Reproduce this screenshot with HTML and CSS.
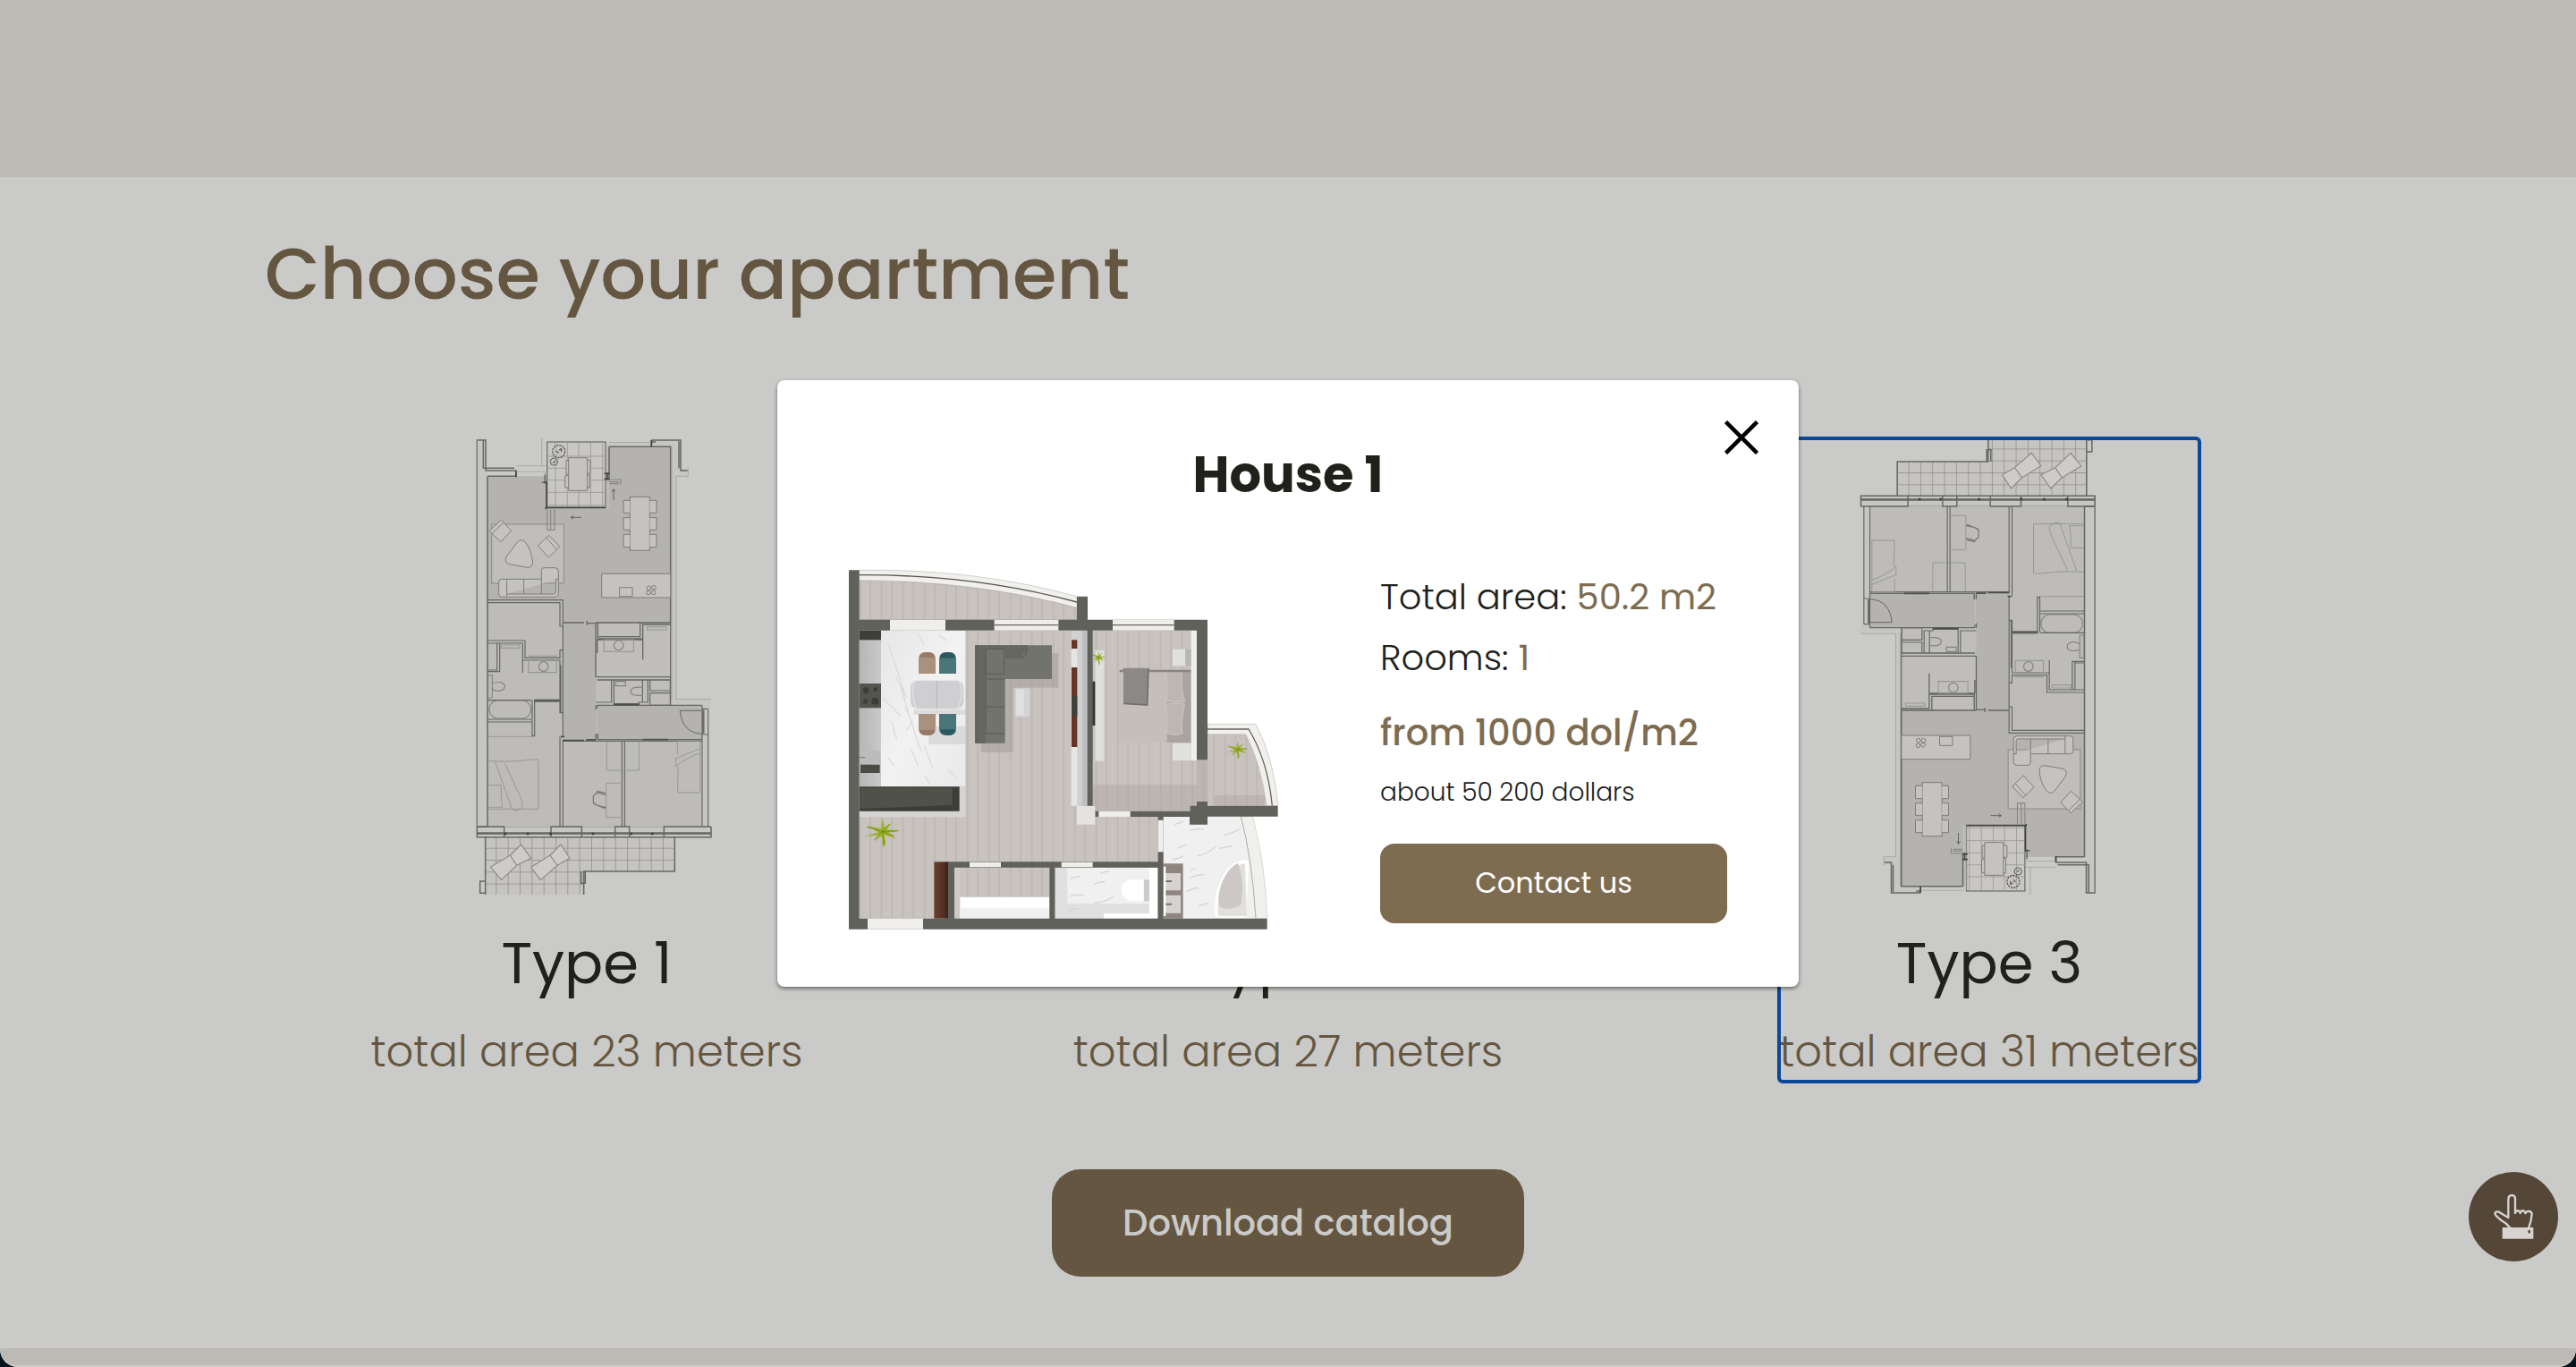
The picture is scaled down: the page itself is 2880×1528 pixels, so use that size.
FILE: index.html
```html
<!DOCTYPE html>
<html lang="en">
<head>
<meta charset="utf-8">
<title>Choose your apartment</title>
<link rel="stylesheet" href="styles.css">
</head>
<body>
<div class="page">
<div class="band band-top"></div>
<section class="catalog">
  <h1 class="heading">Choose your apartment</h1>
  <div class="types">
    <article class="card">
      <svg class="plan" viewBox="15 60 900 1530">
        <defs>
          <pattern id="tiles" x="120" y="633" width="40" height="40" patternUnits="userSpaceOnUse"><rect width="40" height="40" fill="#c5c4c1"/><path d="M0 1H40M1 0V40" stroke="#8a8985" stroke-width="2.500"/></pattern>
          <g id="floorplan" fill="none" stroke="#666662" stroke-width="3.500">
            <path d="M97 64H130V187H330V72H540V88H682V64H780V158H805V187H765V935H882V965H872V1362H882V1397H97Z" fill="#c6c6c3" stroke="none"/>
            <path d="M134 70H314V152H134ZM785 60H900V155H785Z" fill="#cacac8" stroke="none"/>
            <path d="M132 187H330V292H528V88H746V955H850V1365H132Z" fill="#bdbcb8" stroke="none"/>
            <path d="M132 187H330V292H540V88H746V678H495V955H852V1070H385V604H132ZM385 678H495V1070H385Z" fill="#b4b3af" stroke="none"/>
            <path d="M497 684H746V955H497Z" fill="#bfbeba" stroke="none"/>
            <path d="M125 1397H760V1512H455V1590H125Z" fill="url(#tiles)" stroke="none"/>
            <rect x="332" y="72" width="196" height="220" fill="#c8c7c4"/>
            <path d="M360 72V292M400 72V292M438 72V292M478 72V292M518 72V292M332 120H528M332 160H528M332 200H528M332 241H528M332 284H528" stroke="#9a9995" stroke-width="2.500"/>
            <path d="M97 1362V66H126V168H228V187H132M118 66V160H222M682 66H780V168H803M682 66V88H746V678M540 88V198H526M774 70V160M682 72H697M132 187V1362M97 1362H132M540 88H682M325 180V208H314" stroke-width="4.500"/>
            <path d="M228 152H314V60M228 172H325V185M314 152H330M540 74H682M528 74V292M765 187V935H882M805 158V187H765M750 88V935M97 66V1362" stroke="#999894" stroke-width="2"/>
            <path d="M330 292H528M330 205V292M322 208H330M524 178H542M524 196H542M534 175V198M228 170V190M328 290V298M682 66V88" stroke="#454541" stroke-width="5"/>
            <rect x="146" y="348" width="242" height="198" fill="#bfbebb" stroke="#92918d"/>
            <g fill="#c4c3c0" stroke="#7e7d79" stroke-width="3">
              <path d="M138 371L178 333 212 370 177 407ZM148 379 185 343M301 420 338 385 374 423 337 459ZM328 392 363 431"/>
              <path d="M232 408Q244 394 258 407Q274 425 281 458Q290 494 267 493L205 482Q186 475 196 456Z"/>
              <path d="M170 542Q170 532 180 532H313V503Q313 494 322 494H358Q370 494 370 505V580Q370 592 359 592H180Q170 592 170 582ZM197 532V592M254 532V582M313 532V582M197 582H356Q361 582 361 574V532H370"/>
              <rect x="610" y="256" width="66" height="180"/>
              <path d="M610 268H588V310H610M610 326H588V367H610M610 382H588V425H610M676 268H699V310H676M676 326H699V367H676M676 382H699V425H676"/>
              <path d="M404 125H467V235H404ZM404 133H396V180H404M404 185H392V225H404M467 133H477V178H467M467 183H475V225H467"/>
              <path d="M515 514H746V594H515ZM575 560H618V590H575Z"/>
              <circle cx="673" cy="562" r="7"/><circle cx="690" cy="560" r="7"/><circle cx="672" cy="577" r="7"/><circle cx="689" cy="577" r="7"/>
            </g>
            <g stroke="#4e4e4a"><circle cx="371" cy="104" r="21" stroke-dasharray="7 3"/><circle cx="355" cy="138" r="12" stroke-dasharray="6 2"/><path d="M363 102l8 8M380 94v12M373 100l5-6M352 142l6-6"/></g>
            <path d="M332 298V367H357V298M344 298V367M540 198H579V215M540 206H570V212H540" stroke="#8a8985"/>
            <path d="M412 325H447M420 320L411 325 420 331M555 267V231M549 239L555 230 561 239" stroke="#555551" stroke-width="2.500"/>
            <path d="M132 602H385V690M132 611H375V690H385M385 770H375V796H258V738H132M132 747H250V804H375V980H385V770M164 747V842H132M173 747V842H164M134 837H164M250 804V846M385 690V770M378 820V980"/>
            <path d="M385 678H456M466 672V686M466 680H495V778M495 678V860M462 1070H495V1052H502V1070H852M495 860H746M500 870H746M746 684H653V732H502V684M653 684V802M644 678V725H502V680M495 678H746M500 735H650M500 735V780" stroke-width="4"/>
            <path d="M178 753H240V763H178ZM668 692H732V702H668ZM523 735H622V775H523ZM270 790H364V845H270Z" stroke="#999894"/>
            <circle cx="572" cy="754" r="16" stroke="#858480"/><circle cx="320" cy="825" r="16" stroke="#858480"/>
            <g stroke="#858480"><path d="M134 854H148V930H134ZM148 882Q160 876 175 878Q190 882 190 892Q190 904 172 907Q158 908 148 900"/>
            <rect x="138" y="938" width="140" height="61" rx="30"/><path d="M562 875H595V890H562ZM648 895Q615 892 612 908Q612 924 648 922"/></g>
            <path d="M132 938H280M132 1002H282V1058H290V936H372M132 1011H280M282 938V1000M292 942H372M385 980V1060M375 1060V1362M385 1070V1362M583 1075V1362M592 1075V1362M385 1075H850M852 955V1362M872 967V1362M852 967H872M852 1053H872M500 955H852M495 955V970M500 965V955"/>
            <path d="M495 945H548V870M556 870V950H640V945H670V870M556 945V870M652 870V945M677 870V906H745M677 914H745M677 914V955H745V870M746 678V955"/>
            <path d="M856 970V1050" stroke="#6a6a66" stroke-width="7"/>
            <path d="M850 973H778Q785 1048 852 1051" stroke-width="3"/>
            <path d="M498 970V1052" stroke="#c6c6c3" stroke-dasharray="8 5"/>
            <path d="M290 940H375M385 1073H456M462 1071H495M555 953H642M653 1070H737M378 1060H390" stroke="#4c4c48" stroke-width="5"/>
            <g stroke="#92918d" stroke-width="2.500"><path d="M134 1142Q210 1146 260 1139T303 1144V1303H134M134 1223H178Q176 1260 182 1297H134M158 1145L215 1305Q232 1314 250 1295L246 1270 190 1150"/><path d="M134 1060H282M532 1075V1173H641V1075M585 1216H530V1331H585M771 1160 770 1248H845V1075H769V1120M845 1100L764 1133V1160Q800 1130 845 1115"/></g>
            <path d="M499 1243L527 1249M530 1255 499 1248 487 1260V1280L497 1290 530 1298M487 1285L526 1301" stroke="#777672"/>
            <path d="M97 1362H188V1397M345 1397V1362H448V1397M560 1397V1362H608V1397M724 1397V1362H882M97 1362V1397H882V1362M97 1386H882M97 1383H882" stroke-width="4.500"/>
            <path d="M188 1364H345M448 1364H560M608 1364H724" stroke="#9b9a96" stroke-width="2"/>
            <path d="M188 1386h8M263 1386h8M340 1386h8M482 1386h8M610 1386h8M681 1386h8" stroke="#3d3d3a" stroke-width="7"/>
            <path d="M125 1397V1590M760 1397V1512H455V1590M446 1512V1552H460V1512M125 1545H107V1585H125" stroke-width="4.500"/>
            <path d="M143 1497L208 1458 230 1492 178 1541ZM208 1458 245 1422 278 1468 230 1492ZM278 1498L342 1458 366 1492 310 1541ZM342 1458 378 1422 408 1468 366 1492Z" fill="#cdccc9" stroke="#8d8c88"/>
          </g>
        </defs>
        <use href="#floorplan"/>
      </svg>
      <h2 class="type">Type 1</h2>
      <p class="area">total area 23 meters</p>
    </article>
    <article class="card">
      <svg class="plan" viewBox="15 60 900 1530"><use href="#floorplan"/></svg>
      <h2 class="type">Type 2</h2>
      <p class="area">total area 27 meters</p>
    </article>
    <article class="card card-focused">
      <svg class="plan" viewBox="0 0 900 1530"><use href="#floorplan" transform="translate(901.5 1590) rotate(180)"/></svg>
      <h2 class="type">Type 3</h2>
      <p class="area">total area 31 meters</p>
    </article>
  </div>
  <button class="download">Download catalog</button>
</section>
<div class="band band-bottom"></div>

<button class="fab" aria-label="Touch">
  <svg viewBox="0 0 150 170" width="50" height="56.7"><path d="M65 122Q50 104 34 96Q16 82 13 74Q14 66 24 67L58 87V27Q58 12 70 12T81 27V72Q84 62 92 64Q97 66 98 72Q101 62 109 64Q115 67 115 73Q119 64 128 66Q137 68 137 76L133 100 126 122" fill="none" stroke="#d6d3d0" stroke-width="7" stroke-linejoin="round"/><path d="M38 120H142V158H38Z" fill="#d6d3d0"/><ellipse cx="128" cy="134" rx="4" ry="6" fill="#544737"/></svg>
</button>

<div class="modal" role="dialog">
  <button class="close" aria-label="Close"><svg viewBox="0 0 38 38" width="38" height="38"><path d="M1.500 1.500 36.500 36.500M36.500 1.500 1.500 36.500" stroke="#000" stroke-width="4.500"/></svg></button>
  <h2 class="modal-title">House 1</h2>
  <div class="modal-body">
    <svg class="house" viewBox="54 48 1446 1212">
      <defs>
        <pattern id="wood" x="92" y="0" width="72" height="400" patternUnits="userSpaceOnUse"><rect width="72" height="400" fill="#c9c3bf"/><path d="M3 0V400M37 0V400" stroke="#b1aca8" stroke-width="2.500"/></pattern>
        <linearGradient id="steel" x2="1"><stop stop-color="#b5b5b5"/><stop offset="1" stop-color="#c9c9c9"/></linearGradient>
        <linearGradient id="marble" x2="1" y2="1"><stop stop-color="#e6e6e6"/><stop offset=".5" stop-color="#f2f2f2"/><stop offset="1" stop-color="#e9e9e9"/></linearGradient>
        <linearGradient id="door" x2="1"><stop stop-color="#6b4030"/><stop offset=".6" stop-color="#573022"/><stop offset="1" stop-color="#3b2018"/></linearGradient>
        <g id="plant"><path d="M0 -8L-50 -20 -14 3 -60 18 -8 12 -30 36 0 14 2 54 12 42 8 12 46 24 20 4 62 -2 14 -6 36 -32 8 -12 2 -44 -4 -12 -30 -34Z" fill="#9db32a"/><path d="M0 0L-52 -15M0 0L6 46M0 0L24 -24M0 0L-26 28M0 0L40 16M0 0L52 -2" fill="none" stroke="#6f8d12" stroke-width="3"/></g>
      </defs>
      <path d="M92 86Q480 90 822 176V218H92Z" fill="url(#wood)" stroke="#999" stroke-width="1.500"/>
      <path d="M92 52Q480 46 822 140V178Q480 86 92 86Z" fill="#f1f0ec" stroke="#aaa" stroke-width="1.500"/>
      <path d="M92 68Q480 66 822 159" fill="none" stroke="#55554e" stroke-width="4"/>
      <path d="M92 254H1226V870H1112V1040H1100V1220H92Z" fill="url(#wood)"/>
      <path d="M1224 602H1388Q1440 700 1458 842H1224Z" fill="url(#wood)"/>
      <path d="M875 772H1224V858H875ZM1224 688H1262V830H1224ZM1285 806H1452V842H1285Z" fill="#a9a19b" opacity=".4"/>
      <path d="M1260 568H1422Q1485 690 1496 842H1458Q1440 700 1388 602H1260Z" fill="#f1f0ec" stroke="#aaa" stroke-width="1.500"/>
      <path d="M1260 585H1398Q1462 690 1477 842" fill="none" stroke="#66665f" stroke-width="4"/>
      <path d="M1112 878H1372Q1420 1020 1422 1220H1112Z" fill="#f0f0f0"/>
      <path d="M1372 878H1412Q1456 1050 1460 1220H1422Q1410 1020 1372 878Z" fill="#f1f0ec" stroke="#bbb" stroke-width="1.500"/>
      <path d="M1372 878Q1410 1020 1422 1220" fill="none" stroke="#888" stroke-width="1.500"/>
      <path d="M92 254H165V778H92Z" fill="url(#steel)"/><path d="M92 254H165V286H92Z" fill="#3e3f38"/><path d="M92 432H165V514H92Z" fill="#54554e"/>
      <g fill="#3c3d37"><circle cx="114" cy="455" r="10"/><circle cx="146" cy="452" r="7"/><circle cx="113" cy="492" r="8"/><circle cx="145" cy="491" r="12"/></g>
      <path d="M96 656H162V700H96Z" fill="#bbb"/><path d="M92 680H112" stroke="#777" stroke-width="3"/><path d="M96 704H161V732H96Z" fill="#4b4c44"/>
      <path d="M165 254H448V778H165Z" fill="url(#marble)"/>
      <path d="M190 300L250 480 215 410M230 440L285 620 300 660M200 560l18 60-12-35M288 262l20 38M245 510L270 560 250 590M310 640l30 80M190 680l20 30M265 650l25 60M360 270l24 18M390 720l30 30M170 480l60 60M210 365l15 40M310 740l20 30" fill="none" stroke="#dcdcdc" stroke-width="4"/>
      <path d="M428 778H448V880H92V858H428Z" fill="#d6d4d2"/>
      <path d="M92 778H428V860H92Z" fill="#3d3e37"/><path d="M96 782H404V840L92 852Z" fill="#505148"/>
      <path d="M325 575H448V636H325ZM275 520H448V536H275Z" fill="#c8c8c8" opacity=".5"/>
      <rect x="264" y="422" width="178" height="95" rx="24" fill="#cfcfd2"/><path d="M352 424V516" stroke="#b5b5b8" stroke-width="3"/><path d="M280 422Q260 465 285 517M426 422Q448 465 420 517" fill="none" stroke="#e2e2e4" stroke-width="4"/>
      <path d="M291 399V350Q291 327 314 327H326Q348 327 348 350V399ZM291 534V583Q291 606 314 606H326Q348 606 348 583V534Z" fill="#aa917d"/><path d="M293 345Q298 327 320 327T346 345ZM293 588Q298 606 320 606T346 588Z" fill="#967a65"/>
      <path d="M360 399V350Q360 327 383 327H395Q417 327 417 350V399ZM360 534V583Q360 606 383 606H395Q417 606 417 583V534Z" fill="#4a7678"/><path d="M362 347Q367 327 389 327T415 347ZM362 586Q367 606 389 606T415 586Z" fill="#285a5e"/>
      <path d="M500 330H760V446H608V662H500Z" fill="#a39d98" opacity=".55"/>
      <path d="M480 304H738V417H581V632H480Z" fill="#72736d"/><path d="M480 304H655V330H640V345H582V316H516V632H480Z" fill="#666761"/><path d="M516 316H578V400H516ZM516 417H581M516 510H581M516 600H581M583 345H640Q655 340 655 306M516 316V600M488 304V632" fill="none" stroke="#5b5c56" stroke-width="3"/>
      <rect x="614" y="448" width="50" height="96" rx="8" fill="#d4d4d6"/><path d="M618 452h26v86h-26Z" fill="#e0e0e2"/>
      <path d="M803 254H857V842H803Z" fill="#cfd0cf"/><path d="M803 286H823V842H803Z" fill="#e5e5e4"/><path d="M840 254H857V842H840Z" fill="#bdbfc0"/>
      <path d="M804 286H823V315H804ZM804 378H823V645H804Z" fill="#653525"/><path d="M804 475H823V542H804Z" fill="#40413b"/>
      <path d="M883 320H913V692H883Z" fill="#dfdfde"/><path d="M873 425H883V573H873Z" fill="#333"/>
      <path d="M1205 254H1224V690H1205Z" fill="#f0f0ef"/><path d="M1143 317H1186V373H1143ZM1143 632H1205V690H1143Z" fill="#e0e0df"/><path d="M1186 317H1205V373H1186Z" fill="#b8b5b2"/>
      <path d="M965 388H1204V630H965Z" fill="#c5bebb"/><path d="M1124 388H1204V630H1124Z" fill="#aaa39f"/><path d="M1120 395Q1150 385 1175 395Q1170 450 1184 492Q1150 500 1122 490Q1132 440 1120 395ZM1120 502Q1150 495 1184 500Q1170 560 1176 600Q1150 610 1122 598Q1132 550 1120 502Z" fill="#bdb7b3" stroke="#d6d1cd" stroke-width="2"/><path d="M965 390H1204" stroke="#8a8582" stroke-width="7"/><path d="M978 380H1062L1058 504 978 498Z" fill="#8b8886"/><path d="M1062 382L1058 504 978 499" fill="none" stroke="#716e6c" stroke-width="5"/>
      <path d="M750 1050H1092V1220H750Z" fill="#e0e0e0"/><path d="M790 1050H1065V1170H790Z" fill="#f0f0f0"/><path d="M1065 1050H1092V1220H1065ZM912 1204H1092V1220H912Z" fill="#fff"/><path d="M1046 1090H1065V1162H1046Z" fill="#cbcbce"/><path d="M1046 1090H1000Q972 1098 972 1125T1000 1162H1046Z" fill="#fff"/>
      <path d="M800 1085l30-6M880 1105q20-10 36-6M800 1145q30-8 44-2M880 1168q30 0 66-22M790 1196q20-12 36-8M900 1070q20-10 30-8M1200 925q25-8 50-4M1160 985l30-12M1225 1010q30-4 62-30M1315 940q25-4 52-18M1300 985l44-8M1140 1025l40-14M1200 1085q20-12 50-12M1190 1130q25-14 40-12M1230 1180q20-12 34-10M1200 1060l20-8M1150 905l30-10" fill="none" stroke="#d2d2d2" stroke-width="3.500"/>
      <path d="M410 1050H430V1220H410Z" fill="#cfcac8"/><path d="M430 1148H730V1220H430Z" fill="#fff"/><path d="M430 1186H730V1220H430Z" fill="#f0f0f0"/>
      <path d="M1112 1036H1178V1220H1112Z" fill="#90857e"/><path d="M1112 1068H1170V1126H1112ZM1112 1142H1170V1202H1112Z" fill="#d6d2cf"/><path d="M1112 1046H1120V1212H1112Z" fill="#fff"/><path d="M1120 1095H1140M1120 1172H1140" stroke="#777" stroke-width="6"/>
      <path d="M1390 1024Q1340 1025 1310 1080Q1278 1140 1286 1216H1390Q1394 1120 1398 1030Z" fill="#fff"/><path d="M1386 1036Q1345 1040 1316 1100Q1290 1150 1296 1212H1392Z" fill="#e2e0de"/><path d="M1362 1034Q1334 1045 1310 1095Q1290 1150 1300 1178Q1330 1200 1372 1174Q1386 1100 1362 1034Z" fill="#cdc8c5"/>
      <g fill="#60615b"><path d="M57 52H92V1220H1460V1256H57ZM822 140H858V218H1260V688H1224V254H875V842H857V254H92V218H822ZM883 860H1202V842H1224V828H1260V842H1496V878H1260V905H1200V879H883ZM1094 878H1112V1220H1094ZM390 1030H1100V1049H748V1220H730V1049H411V1220H390Z"/></g>
      <path d="M195 218H381V254H195ZM545 218H760V254H545ZM942 218H1148V254H942ZM120 1220H306V1256H120ZM895 860H1001V879H895ZM1094 890H1112V997H1094ZM462 1031H567V1048H462ZM770 1031H875V1048H770Z" fill="#efeeea"/>
      <path d="M545 236H760M942 236H1148" stroke="#66665f" stroke-width="3.500"/>
      <path d="M822 843H883V905H822Z" fill="#e5e3e2"/>
      <path d="M343 1030H390V1220H343Z" fill="url(#door)"/>
      <use href="#plant" transform="translate(169 928)"/><use href="#plant" transform="translate(1360 652) scale(.62)"/><use href="#plant" transform="translate(894 344) scale(.4 .5)"/>
    </svg>
    <div class="info">
      <p class="fact">Total area: <b>50.2 m2</b></p>
      <p class="fact">Rooms: <b>1</b></p>
      <p class="price">from 1000 dol/m2</p>
      <p class="about">about 50 200 dollars</p>
      <button class="contact">Contact us</button>
    </div>
  </div>
</div>
</div>
</body>
</html>
```
FILE: styles.css
```css
* { box-sizing: border-box; }
html { background: #06131a; }
body { margin: 0; font-family: Poppins, Inter, "Open Sans", sans-serif; color: #20211b; }
h1, h2, p { margin: 0; font-weight: 400; white-space: nowrap; }
button { border: 0; padding: 0; margin: 0; font: inherit; display: flex; align-items: center; justify-content: center; }
.page { position: relative; width: 2880px; height: 1528px; overflow: hidden; display: flex; flex-direction: column; border-radius: 0 0 20px 20px; background: #cacac8; }
.band { background: #bdbab5; }
.band-top { height: 198px; }
.band-bottom { height: 21px; border-bottom: 2px solid #cfccc8; border-radius: 0 0 20px 20px; }
.catalog { height: 1309px; padding-top: 48px; display: flex; flex-direction: column; align-items: center; }
.heading { align-self: flex-start; margin-left: 296px; font-size: 80px; line-height: 120px; font-weight: 500; color: #645640; }
.types { margin-top: 124px; display: grid; grid-template-columns: repeat(3, 784px); justify-items: center; }
.card { width: 470px; height: 719px; display: flex; flex-direction: column; align-items: center; }
.card-focused { outline: 4px solid #0a489b; outline-offset: -2px; border-radius: 4px; }
.plan { width: 300px; height: 510px; flex: none; }
.type { margin-top: 32px; font-size: 64px; line-height: 90px; }
.area { margin-top: 18px; font-size: 48px; line-height: 71px; font-weight: 300; color: #645640; }
.download { margin-top: 98px; width: 528px; height: 120px; padding-bottom: 1px; border-radius: 32px; background: #645640; color: #cacac8; font-size: 40px; font-weight: 500; }
.fab { position: absolute; left: 2760px; top: 1310px; width: 100px; height: 100px; border-radius: 50%; background: #544737; }
.modal { position: absolute; left: 869px; top: 425px; width: 1142px; height: 678px; padding: 64px 79px 0; border-radius: 8px; background: #fff; box-shadow: 0 2px 4px rgba(0, 0, 0, .5); }
.close { position: absolute; right: 45px; top: 45px; background: none; }
.modal-title { text-align: center; font-size: 56px; line-height: 84px; font-weight: 700; }
.modal-body { margin-top: 60px; display: flex; gap: 113px; }
.house { width: 482px; height: 404px; margin-top: 3px; flex: none; }
.info { width: 388px; flex: none; }
.fact { font-size: 40px; line-height: 68px; font-weight: 300; }
.fact b { font-weight: 400; color: #7e6c50; }
.price { margin-top: 16px; font-size: 40px; line-height: 68px; font-weight: 500; color: #7e6c50; }
.about { margin-top: 12px; font-size: 28px; line-height: 42px; font-weight: 300; }
.contact { margin-top: 36px; width: 388px; height: 89px; padding-bottom: 2px; border-radius: 16px; background: #7e6c50; color: #fff; font-size: 32px; }
```
